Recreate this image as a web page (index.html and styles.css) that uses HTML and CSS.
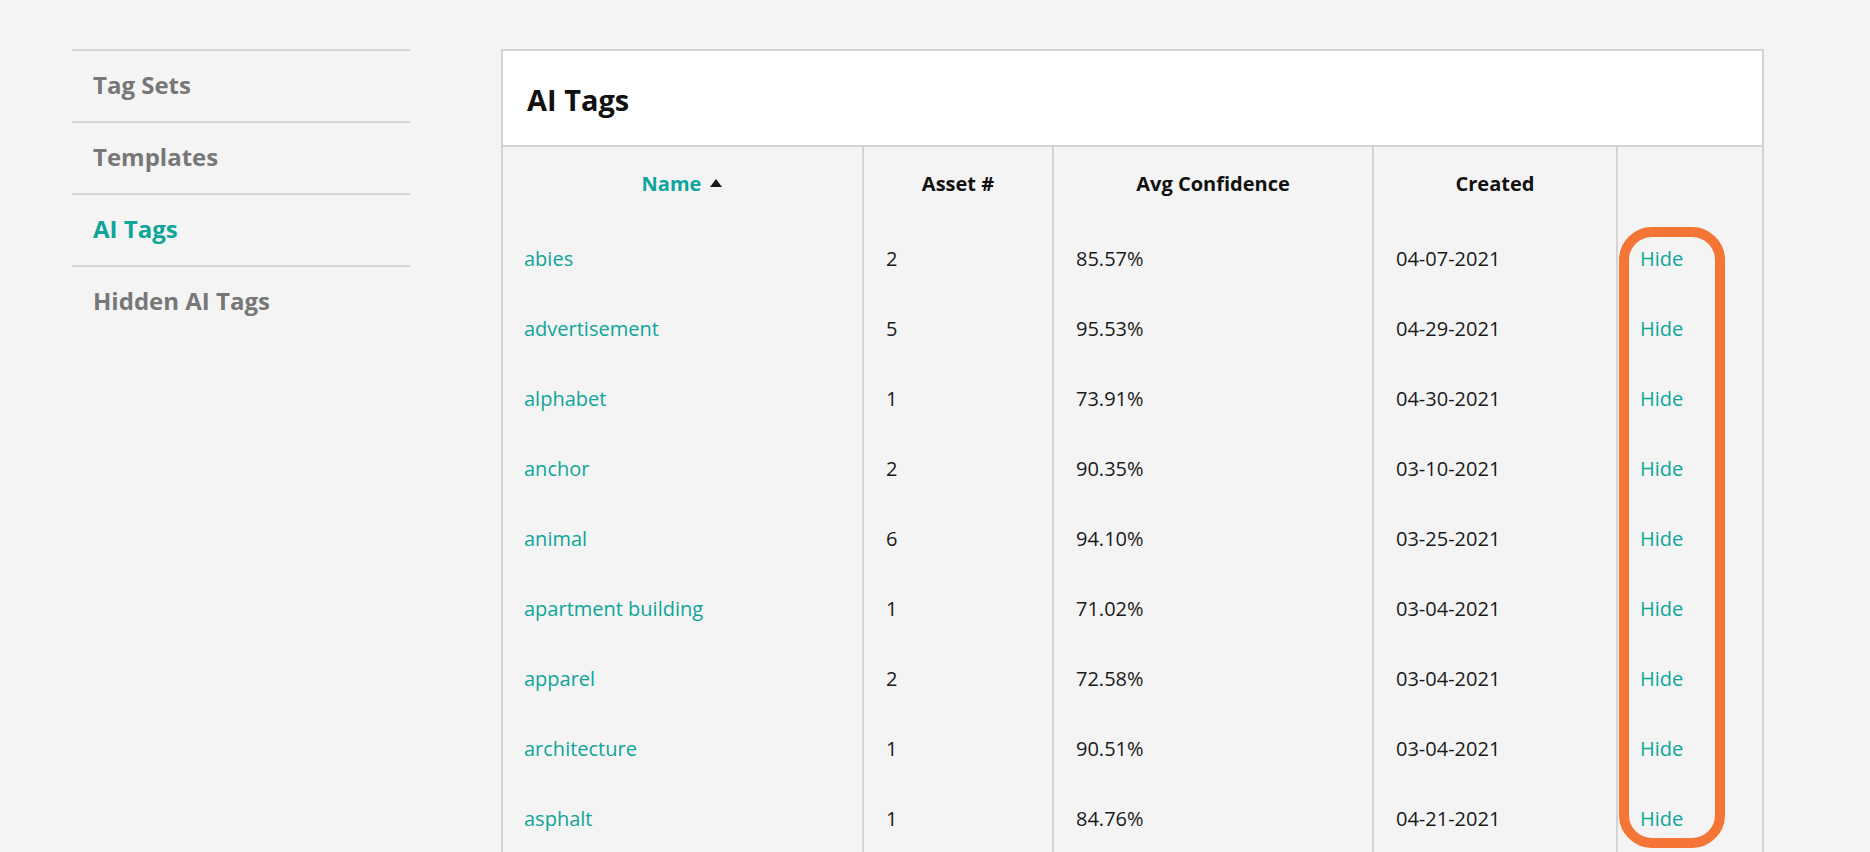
FILE: index.html
```html
<!DOCTYPE html>
<html lang="en">
<head>
<meta charset="utf-8">
<title>AI Tags</title>
<link rel="stylesheet" href="styles.css">
</head>
<body>
<div class="page">
  <nav class="sidebar">
    <a class="nav-item" href="#">Tag Sets</a>
    <a class="nav-item" href="#">Templates</a>
    <a class="nav-item active" href="#">AI Tags</a>
    <a class="nav-item" href="#">Hidden AI Tags</a>
  </nav>
  <section class="card">
    <header class="card-header"><h1 class="card-title">AI Tags</h1></header>
    <div class="grid">
      <div class="cell head name-head"><span class="sort">Name</span><svg class="tri" width="12" height="8" viewBox="0 0 12 8"><path d="M6 0 L12 8 L0 8 Z" fill="#1a1a1a"/></svg></div>
      <div class="cell head">Asset #</div>
      <div class="cell head">Avg Confidence</div>
      <div class="cell head">Created</div>
      <div class="cell head"></div>

      <div class="cell first"><a href="#">abies</a></div><div class="cell">2</div><div class="cell">85.57%</div><div class="cell">04-07-2021</div><div class="cell"><a href="#">Hide</a></div>
      <div class="cell first"><a href="#">advertisement</a></div><div class="cell">5</div><div class="cell">95.53%</div><div class="cell">04-29-2021</div><div class="cell"><a href="#">Hide</a></div>
      <div class="cell first"><a href="#">alphabet</a></div><div class="cell">1</div><div class="cell">73.91%</div><div class="cell">04-30-2021</div><div class="cell"><a href="#">Hide</a></div>
      <div class="cell first"><a href="#">anchor</a></div><div class="cell">2</div><div class="cell">90.35%</div><div class="cell">03-10-2021</div><div class="cell"><a href="#">Hide</a></div>
      <div class="cell first"><a href="#">animal</a></div><div class="cell">6</div><div class="cell">94.10%</div><div class="cell">03-25-2021</div><div class="cell"><a href="#">Hide</a></div>
      <div class="cell first"><a href="#">apartment building</a></div><div class="cell">1</div><div class="cell">71.02%</div><div class="cell">03-04-2021</div><div class="cell"><a href="#">Hide</a></div>
      <div class="cell first"><a href="#">apparel</a></div><div class="cell">2</div><div class="cell">72.58%</div><div class="cell">03-04-2021</div><div class="cell"><a href="#">Hide</a></div>
      <div class="cell first"><a href="#">architecture</a></div><div class="cell">1</div><div class="cell">90.51%</div><div class="cell">03-04-2021</div><div class="cell"><a href="#">Hide</a></div>
      <div class="cell first"><a href="#">asphalt</a></div><div class="cell">1</div><div class="cell">84.76%</div><div class="cell">04-21-2021</div><div class="cell"><a href="#">Hide</a></div>
    </div>
    <div class="highlight"></div>
  </section>
</div>
</body>
</html>
```

FILE: styles.css
```css
* { box-sizing: border-box; }
html, body { margin: 0; padding: 0; }
body {
  background: #f4f4f4;
  font-family: "Open Sans", "Noto Sans", "Liberation Sans", sans-serif;
  color: #111;
  overflow: hidden;
}
a { text-decoration: none; color: #0ea59b; }

.page {
  display: flex;
  align-items: flex-start;
  padding: 49px 0 0 72px;
  gap: 91px;
}

.sidebar {
  width: 338px;
  display: flex;
  flex-direction: column;
}
.nav-item {
  display: block;
  border-top: 2px solid #d4d4d4;
  padding: 16px 21px 18px;
  font-size: 24px;
  line-height: 36px;
  font-weight: 700;
  color: #777;
}
.nav-item.active { color: #0ea59b; }

.card {
  position: relative;
  width: 1263px;
  border: 2px solid #d4d4d4;
  border-bottom: none;
}
.card-header {
  background: #fff;
  border-bottom: 2px solid #d4d4d4;
  padding: 31px 24px 28px;
}
.card-title {
  margin: 0;
  font-size: 29px;
  line-height: 35px;
  font-weight: 700;
  color: #111;
}

.grid {
  display: grid;
  grid-template-columns: 359px 190px 320px 244px 146px;
  font-size: 20px;
  line-height: 30px;
  color: #1a1a1a;
}
.cell {
  padding: 20px 22px;
  border-left: 2px solid #d4d4d4;
  white-space: nowrap;
}
.cell.first, .cell.name-head { border-left: none; padding-left: 21px; }
.cell.head {
  padding-top: 22px;
  padding-bottom: 25px;
  text-align: center;
  font-weight: 700;
  color: #111;
}
.name-head { display: flex; justify-content: center; align-items: center; gap: 9px; }
.name-head .sort { color: #0ea59b; }
.tri { display: block; margin-top: -2px; }

.highlight {
  position: absolute;
  left: 1116px;
  top: 176px;
  width: 106px;
  height: 621px;
  border: 10px solid #f47536;
  border-radius: 33px;
  pointer-events: none;
}
```
